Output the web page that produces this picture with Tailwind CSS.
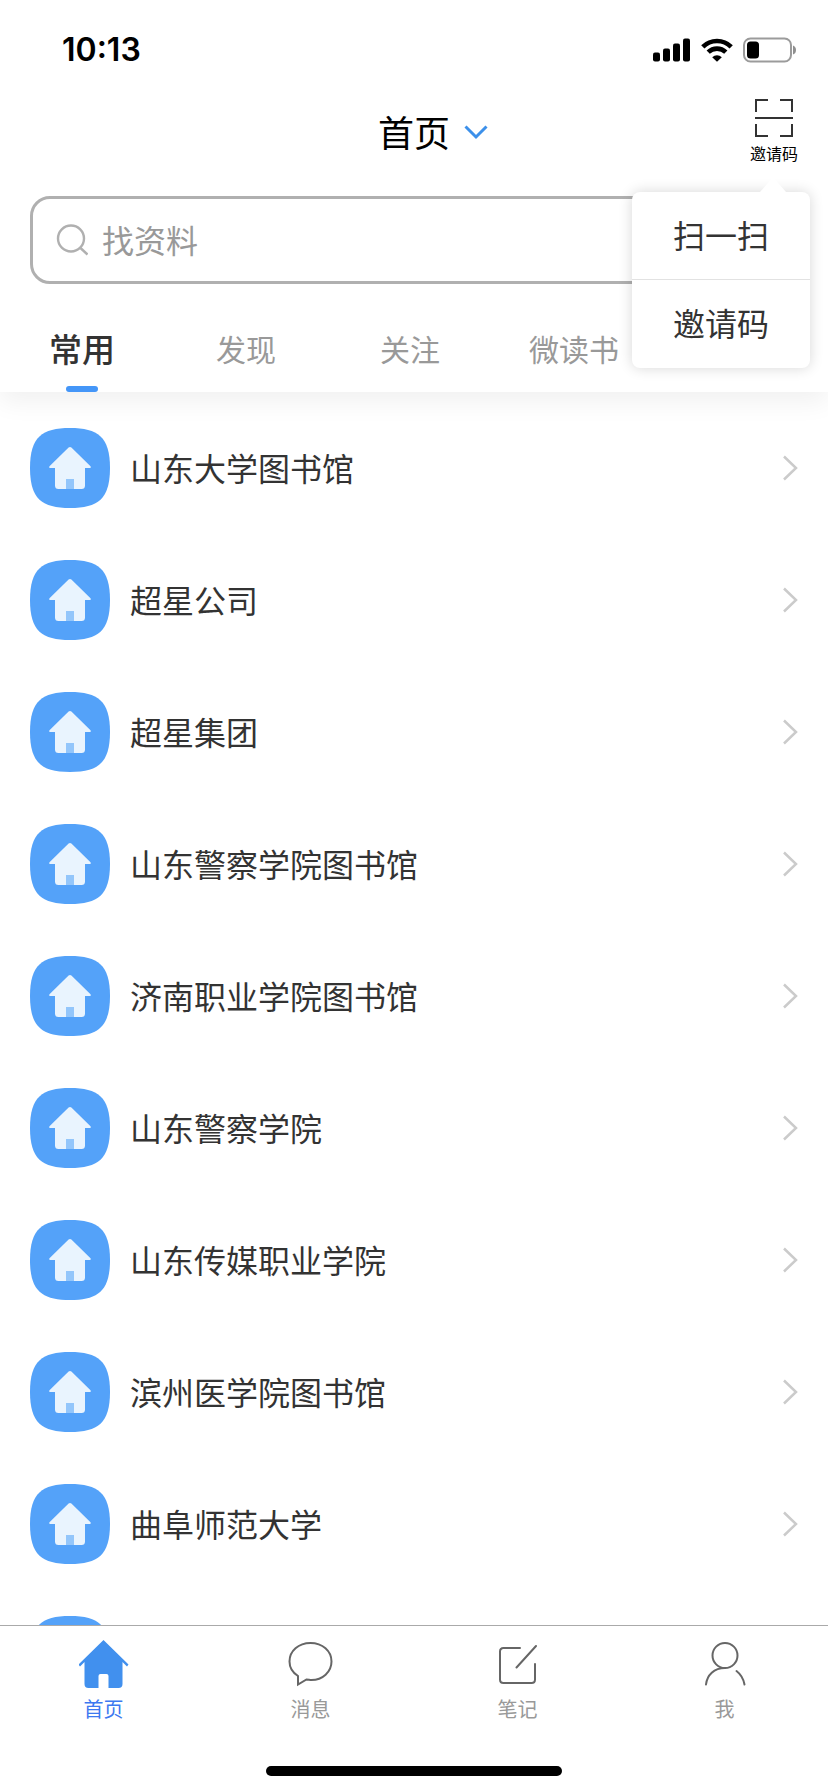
<!DOCTYPE html>
<html lang="zh-CN">
<head>
    <meta charset="UTF-8" />
    <meta name="viewport" content="width=device-width, initial-scale=1.0" />
    <title>首页</title>
    <script src="https://cdn.jsdelivr.net/npm/@tailwindcss/browser@4"></script>
</head>
<body class="h-screen flex flex-col overflow-hidden bg-white text-[#333] font-['Noto_Sans_CJK_SC',sans-serif]">

<svg class="hidden">
    <symbol id="icon-app" viewBox="0 0 80 80">
        <path fill="#54a2f9" d="M40 0C68 0 80 9 80 40S68 80 40 80 0 71 0 40 12 0 40 0z" />
        <path fill="#e9f4fe" d="M38.600 19.600q1.400-1.200 2.800 0L60.500 38.200q1 1.800-1 1.800H55v17.500q0 3.500-3.500 3.500h-23q-3.500 0-3.500-3.500V40h-4.500q-2 0-1-1.800z" />
        <path fill="#93c6fb" d="M36 51h8v10h-8z" />
    </symbol>
    <symbol id="icon-arrow" viewBox="0 0 16 26">
        <path fill="none" stroke="#cbcbcb" stroke-width="2.500" d="M2 1.500 14 13 2 24.500" />
    </symbol>
</svg>

<header class="relative z-10 bg-white shadow-[0_10px_24px_rgba(0,0,0,0.06)]">
    <!-- status bar -->
    <div class="h-22 pt-3 pl-[62px] pr-[31px] flex items-center justify-between text-black">
        <span class="font-['Inter',sans-serif] text-[32px] leading-10 font-semibold">10:13</span>
        <div class="flex items-center gap-[10px]">
            <svg class="w-[38px] h-6" viewBox="0 0 38 24" fill="currentColor">
                <rect x="0" y="14.500" width="7" height="9" rx="2" />
                <rect x="10" y="10.500" width="7" height="13" rx="2" />
                <rect x="20" y="5.500" width="7" height="18" rx="2" />
                <rect x="30" y="0.500" width="7" height="23" rx="2" />
            </svg>
            <svg class="w-8 h-6" viewBox="0 0 32 24" fill="none" stroke="currentColor" stroke-width="4.600">
                <path d="M1.800 8.800a20.200 20.200 0 0 1 28.400 0" />
                <path d="M7.200 14.200a12.600 12.600 0 0 1 17.600 0" />
                <path d="M16 23.800l-4.800-4.600a7 7 0 0 1 9.600 0z" fill="currentColor" stroke="none" />
            </svg>
            <svg class="w-[54px] h-[26px]" viewBox="0 0 54 26">
                <rect x="1" y="1.500" width="47" height="23" rx="6.500" fill="none" stroke="#9b9b9b" stroke-width="2" />
                <rect x="4" y="4.500" width="12" height="17" rx="3.500" />
                <path fill="#8f8f8f" d="M50 8.500q3 1 3 4.500t-3 4.500z" />
            </svg>
        </div>
    </div>

    <!-- title -->
    <div class="h-22 px-[30px] grid grid-cols-[1fr_auto_1fr] items-center">
        <h1 class="col-start-2 row-start-1 pb-0.5 text-4xl text-black">首页</h1>
        <button type="button" aria-label="切换" class="col-start-3 row-start-1 ml-3.5 w-6 justify-self-start">
            <svg class="w-6 h-4" viewBox="0 0 24 16" fill="none" stroke="#3c90ea" stroke-width="3"><path d="M1.500 2.500 12 13 22.500 2.500" /></svg>
        </button>
        <div class="relative col-start-3 row-start-1 justify-self-end">
            <button type="button" class="pb-0.5 flex flex-col items-center gap-1.5 text-base leading-5 text-black">
                <svg class="w-[38px] h-[38px]" viewBox="0 0 38 38" fill="none" stroke="#333" stroke-width="2">
                    <path d="M1 13V1h12M25 1h12v12M37 25v12H25M13 37H1V25M0 19h38" />
                </svg>
                邀请码
            </button>
            <div class="absolute top-full -right-3 mt-[27px] w-[178px] rounded-lg bg-white shadow-[0_0_14px_rgba(0,0,0,0.16)] text-[32px]">
                <svg class="absolute -top-3.5 right-6 w-[26px] h-3.5" viewBox="0 0 26 14"><path fill="#fff" d="M0 14 11 1.500q2-2 4 0L26 14z" /></svg>
                <button type="button" class="block w-full h-22 pb-1 border-b border-[#e2e2e2]">扫一扫</button>
                <button type="button" class="block w-full h-22 pb-1">邀请码</button>
            </div>
        </div>
    </div>

    <!-- search -->
    <label class="mx-[30px] mt-5 h-22 pl-[23px] flex items-center gap-3.5 border-3 border-[#b0b0b0] rounded-[20px]">
        <svg class="w-8 h-8 shrink-0" viewBox="0 0 32 32" fill="none" stroke="#b0b0b0" stroke-width="2.400">
            <circle cx="15" cy="14.500" r="13" /><path d="M24.500 24l7 6.500" />
        </svg>
        <input type="search" placeholder="找资料" aria-label="找资料" class="min-w-0 flex-1 pb-0.5 text-[32px] outline-none placeholder:text-[#999]" />
    </label>

    <!-- tabs -->
    <div class="h-27 pr-2 grid grid-cols-5 text-[30px] leading-10 text-[#999]">
        <button type="button" class="flex flex-col items-center justify-end">
            <span class="mb-[18px] text-[33px] font-medium text-[#333]">常用</span>
            <span class="w-8 h-1.5 rounded-full bg-[#4496f8]"></span>
        </button>
        <button type="button" class="pb-6 flex items-end justify-center">发现</button>
        <button type="button" class="pb-6 flex items-end justify-center">关注</button>
        <button type="button" class="pb-6 flex items-end justify-center">微读书</button>
    </div>
</header>

<main class="flex-1 min-h-0 overflow-hidden pt-2.5">
    <ul id="list"></ul>
</main>

<nav class="border-t border-[#aaa] bg-white">
    <div class="pt-3 grid grid-cols-4 text-xl leading-7 text-[#999]">
        <a href="#" class="flex flex-col items-center gap-[7px] text-[#3d78f0]">
            <svg class="w-[50px] h-[50px]" viewBox="0 0 50 50" fill="#4190ee">
                <path d="M24.500 2 49.500 26.500 48 28.500 43.500 24v22q0 4-4 4H29.500V38q0-2-2-2h-6q-2 0-2 2v12H9.500q-4 0-4-4V24L1 28.500l-1.500-2z" />
            </svg>
            首页
        </a>
        <a href="#" class="flex flex-col items-center gap-[7px]">
            <svg class="w-[50px] h-[50px]" viewBox="0 0 50 50" fill="none" stroke="#666" stroke-width="2">
                <path d="M12 38C6.500 34.500 3.500 29.500 3.500 23.500 3.500 13 12.500 5 24.500 5s21 8 21 18.500S36.500 42 25.500 42c-2 0-3-.6-5-.6L12 46.500z" />
            </svg>
            消息
        </a>
        <a href="#" class="flex flex-col items-center gap-[7px]">
            <svg class="w-[50px] h-[50px]" viewBox="0 0 50 50" fill="none" stroke="#666" stroke-width="2" stroke-linecap="round">
                <path d="M27 10H10.500Q7 10 7 13.500v28Q7 45 10.500 45h28q3.500 0 3.500-3.500V26M23.500 29.500 43 8" />
            </svg>
            笔记
        </a>
        <a href="#" class="flex flex-col items-center gap-[7px]">
            <svg class="w-[50px] h-[50px]" viewBox="0 0 50 50" fill="none" stroke="#666" stroke-width="2" stroke-linecap="round">
                <circle cx="25" cy="17.500" r="12.500" /><path d="M25 30C14 30 7 37 6 46.500M36.500 33q6.500 5 8 13.500" />
            </svg>
            我
        </a>
    </div>
    <div class="mt-[43px] mb-4 mx-auto w-74 h-2.5 rounded-full bg-black"></div>
</nav>

<script>
    const items = [
        "山东大学图书馆",
        "超星公司",
        "超星集团",
        "山东警察学院图书馆",
        "济南职业学院图书馆",
        "山东警察学院",
        "山东传媒职业学院",
        "滨州医学院图书馆",
        "曲阜师范大学",
        ""
    ];

    document.getElementById("list").innerHTML = items.map(name => `
        <li>
            <a href="#" class="h-33 px-[30px] flex items-center gap-5 text-[32px]">
                <svg class="w-20 h-20 shrink-0"><use href="#icon-app" /></svg>
                <span class="flex-1 pb-0.5 truncate">${name}</span>
                <svg class="w-4 h-[26px] shrink-0"><use href="#icon-arrow" /></svg>
            </a>
        </li>`).join("");
</script>

</body>
</html>
